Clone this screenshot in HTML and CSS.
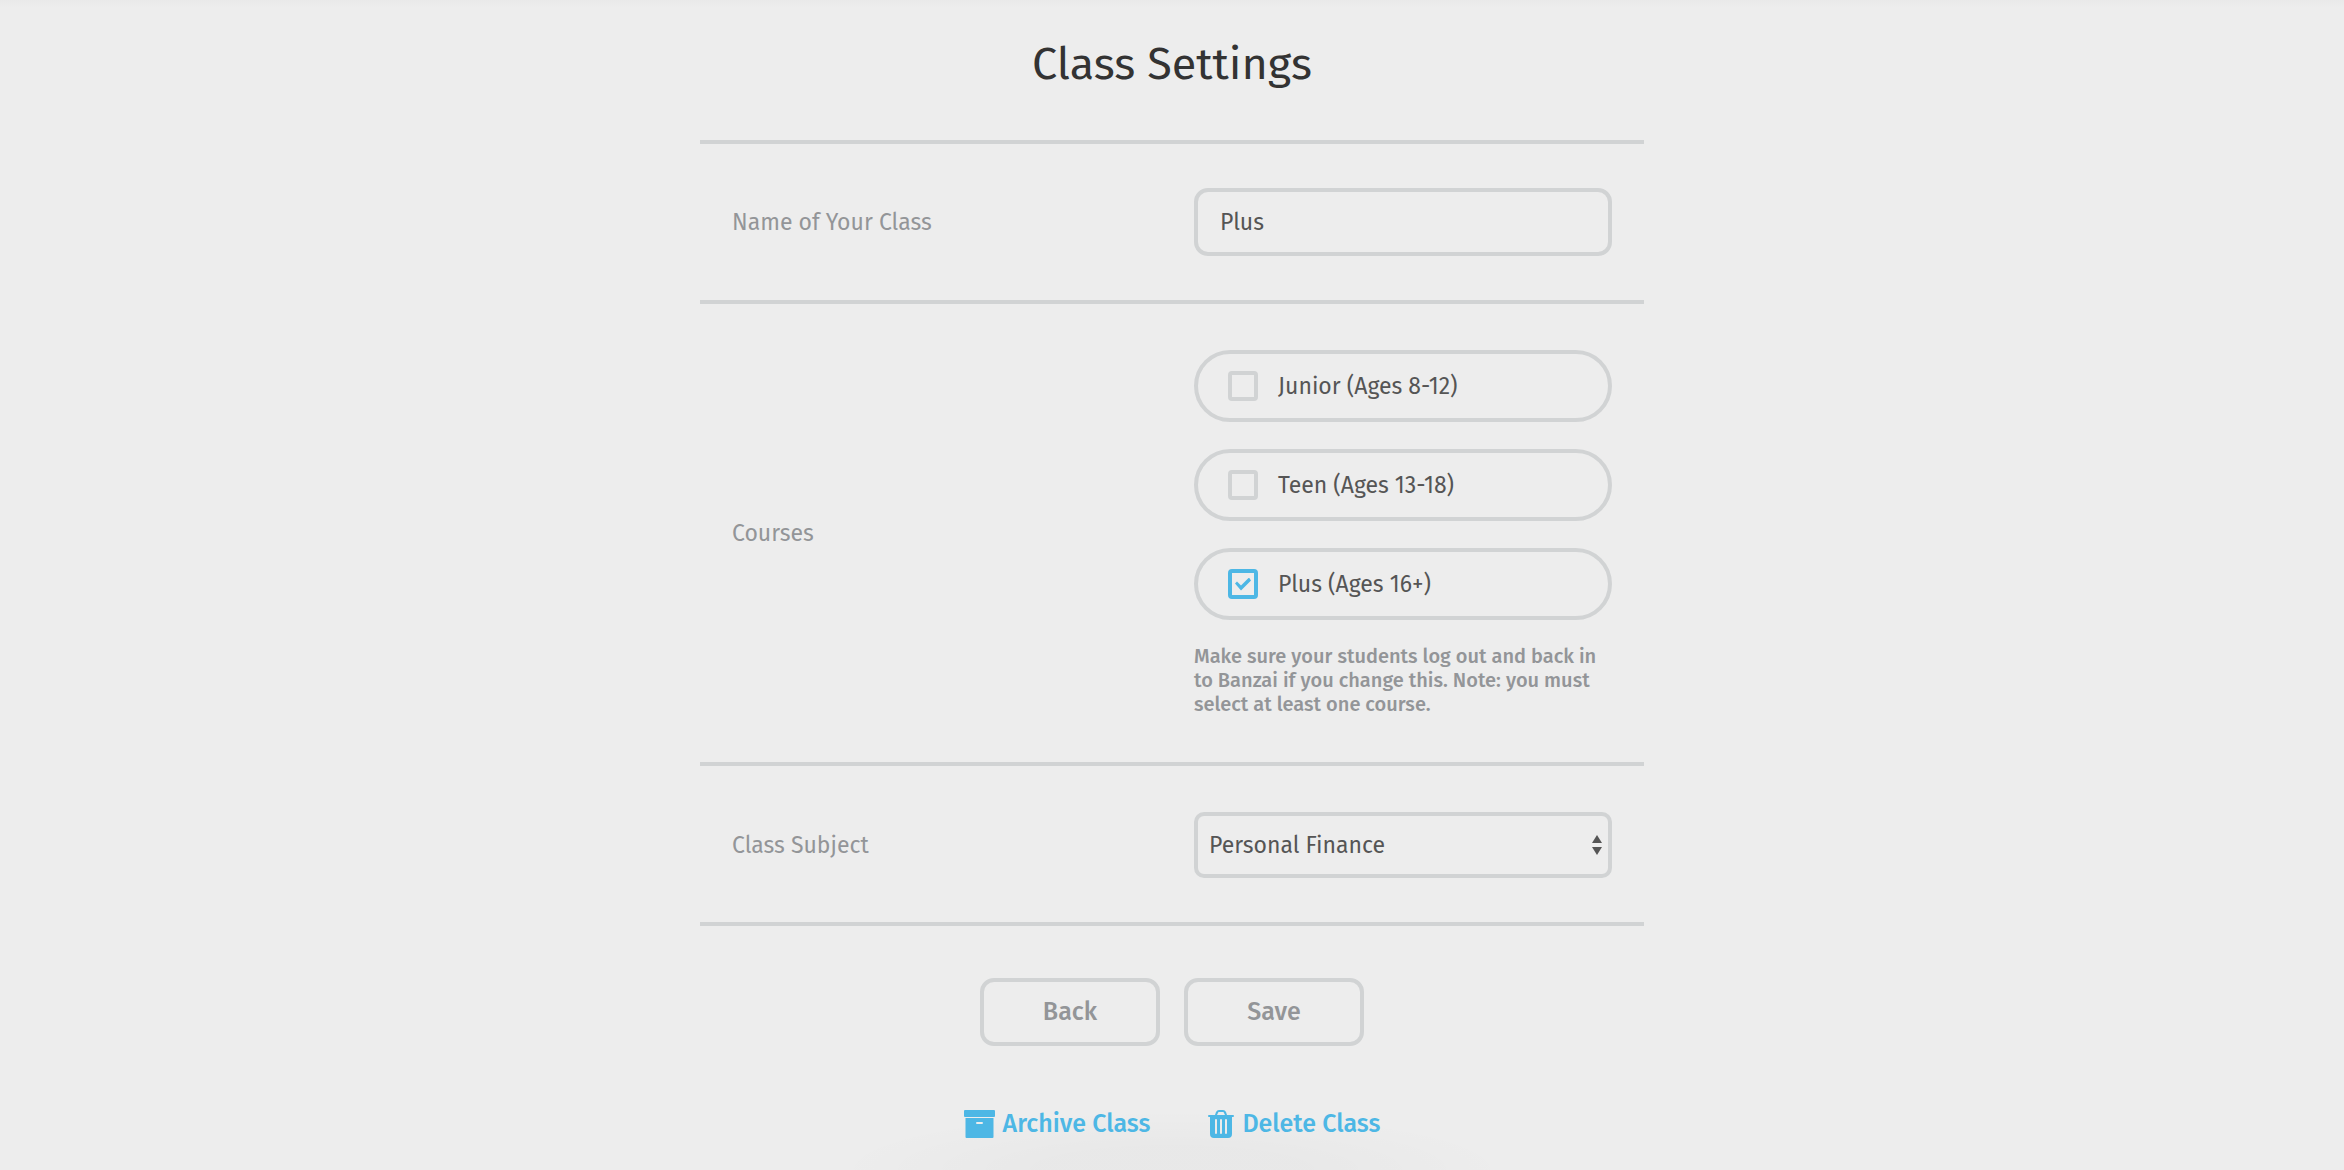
FILE: index.html
```
<!DOCTYPE html>
<html lang="en">
<head>
    <meta charset="utf-8">
    <title>Class Settings</title>
    <link rel="stylesheet" href="styles.css">
</head>
<body>
    <main class="page">
        <h1>Class Settings</h1>

        <form class="settings" id="settings">
            <div class="row">
                <label class="row-label" for="className">Name of Your Class</label>
                <div class="row-field">
                    <input type="text" id="className" name="name" value="Plus">
                </div>
            </div>

            <div class="row" role="group" aria-labelledby="coursesLabel">
                <span class="row-label" id="coursesLabel">Courses</span>
                <div class="row-field">
                    <div class="courses">
                        <label class="course"><input type="checkbox" name="junior">Junior (Ages 8-12)</label>
                        <label class="course"><input type="checkbox" name="teen">Teen (Ages 13-18)</label>
                        <label class="course"><input type="checkbox" name="plus" checked>Plus (Ages 16+)</label>
                    </div>
                    <p class="help">Make sure your students log out and back in to Banzai if you change this. Note: you must select at least one course.</p>
                </div>
            </div>

            <div class="row">
                <label class="row-label" for="subject">Class Subject</label>
                <div class="row-field select-wrap">
                    <select id="subject" name="subject">
                        <option>Personal Finance</option>
                    </select>
                    <svg class="arrows" width="10" height="20" viewBox="0 0 10 20" aria-hidden="true">
                        <path d="M5 0l5 8H0zM5 20l5-8H0z"/>
                    </svg>
                </div>
            </div>
        </form>

        <div class="buttons">
            <button type="button">Back</button>
            <button type="submit" form="settings">Save</button>
        </div>

        <div class="links">
            <a href="#archive">
                <svg width="31" height="28" viewBox="0 0 31 28" aria-hidden="true">
                    <rect x="0" y="0" width="31" height="7" rx="1"/>
                    <path fill-rule="evenodd" d="M1.500 8h28v19a1 1 0 0 1-1 1h-26a1 1 0 0 1-1-1zM13 12a1 1 0 0 0 0 2h5a1 1 0 0 0 0-2z"/>
                </svg>
                Archive Class
            </a>
            <a href="#delete">
                <svg width="26" height="28" viewBox="0 0 26 28" aria-hidden="true">
                    <path fill-rule="evenodd" d="M1 5h6l1-3q1-2 3-2h4q2 0 3 2l1 3h6a1 1 0 0 1 0 2h-1v17q0 4-4 4H6q-4 0-4-4V7H1a1 1 0 0 1 0-2zM9 5h8l-1-2q0-1-1-1h-4q-1 0-1 1zM7 10v13a1 1 0 0 0 2 0V10a1 1 0 0 0-2 0zM12 10v13a1 1 0 0 0 2 0V10a1 1 0 0 0-2 0zM17 10v13a1 1 0 0 0 2 0V10a1 1 0 0 0-2 0z"/>
                </svg>
                Delete Class
            </a>
        </div>
    </main>
</body>
</html>
```
FILE: styles.css
```
* {
    box-sizing: border-box;
}
body {
    margin: 0;
    min-height: 100vh;
    font-family: "Fira Sans", "Noto Sans", sans-serif;
    font-size: 23px;
    color: #555;
    /* soft shadow at the top edge and under the links */
    background:
        radial-gradient(340px 60px at 50% 100%, rgba(0, 0, 0, 0.02), rgba(0, 0, 0, 0.02) 40%, transparent) no-repeat,
        linear-gradient(#e9e9e9, #ededed 8px);
}
.page {
    max-width: 944px;
    margin: 0 auto;
    padding-top: 32px;
}
h1 {
    margin: 0 0 44px;
    font-size: 45px;
    font-weight: 400;
    line-height: 64px;
    text-align: center;
    color: #333;
}
.settings {
    border-top: 4px solid #d1d3d4;
}
.row {
    display: flex;
    align-items: center;
    min-height: 160px;
    padding: 46px 32px;
    border-bottom: 4px solid #d1d3d4;
}
.row:first-child {
    padding: 44px 32px;
}
.row:last-child {
    padding: 46px 32px 44px;
}
.row-label {
    flex: 1;
    color: #939598;
}
.row-field {
    width: 418px;
}
input[type="text"], select {
    display: block;
    width: 100%;
    height: 68px;
    padding: 0 22px;
    border: 4px solid #d1d3d4;
    border-radius: 14px;
    font: inherit;
    color: inherit;
    background: transparent;
}
select {
    height: 66px;
    padding: 0 11px;
    border-radius: 10px;
    appearance: none;
}
.select-wrap {
    position: relative;
}
.arrows {
    position: absolute;
    top: 23px;
    right: 10px;
    fill: #555;
    pointer-events: none;
}
.courses {
    display: grid;
    gap: 27px;
}
.course {
    display: flex;
    align-items: center;
    gap: 20px;
    height: 72px;
    padding: 0 30px;
    border: 4px solid #d1d3d4;
    border-radius: 36px;
}
/* Custom tick box */
.course input {
    appearance: none;
    display: grid;
    place-items: center;
    width: 30px;
    height: 30px;
    margin: 0;
    border: 4px solid #d1d3d4;
    border-radius: 4px;
}
.course input:checked {
    border-color: #4db7e5;
}
.course input:checked::before {
    content: "";
    width: 16px;
    height: 13px;
    background: #4db7e5;
    clip-path: polygon(0 6px, 2px 4px, 6px 8px, 14px 0, 16px 3px, 6px 13px);
}
.help {
    margin: 24px 0 0;
    font-size: 20px;
    font-weight: 500;
    line-height: 24px;
    color: #939598;
}
.buttons {
    display: flex;
    justify-content: center;
    gap: 24px;
    margin-top: 52px;
}
button {
    width: 180px;
    height: 68px;
    border: 4px solid #d1d3d4;
    border-radius: 14px;
    font: inherit;
    font-size: 25px;
    font-weight: 500;
    color: #939598;
    background: transparent;
}
.links {
    display: flex;
    justify-content: center;
    gap: 58px;
    margin-top: 58px;
}
.links a {
    display: flex;
    align-items: center;
    gap: 8px;
    font-size: 25px;
    font-weight: 500;
    line-height: 40px;
    color: #4db7e5;
    text-decoration: none;
}
.links svg {
    fill: currentColor;
}
```
